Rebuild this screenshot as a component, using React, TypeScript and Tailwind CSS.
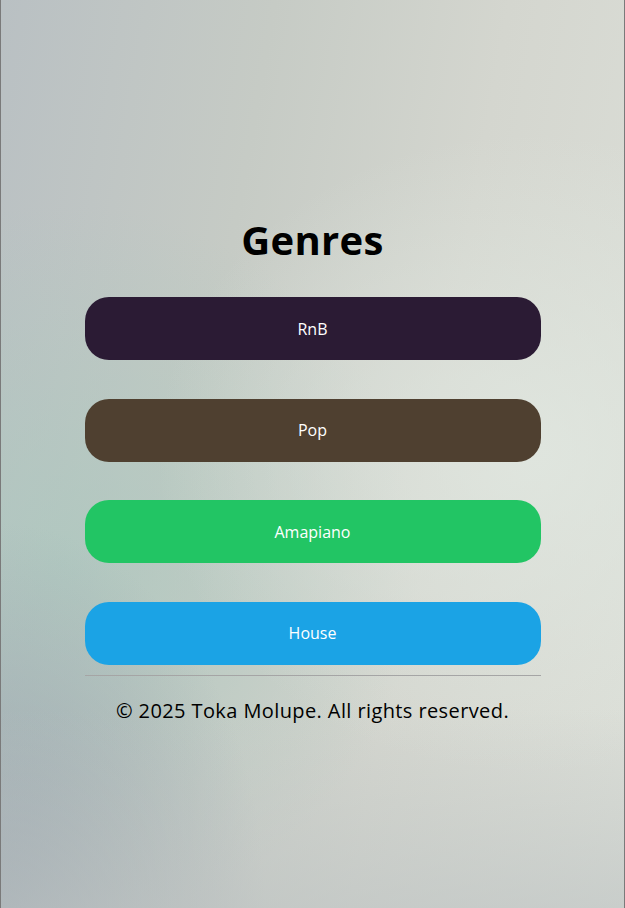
export default function App() {
  const genres = [
    { name: "RnB", cls: "bg-[#2b1b34]" },
    { name: "Pop", cls: "bg-[#4f4030]" },
    { name: "Amapiano", cls: "bg-[#22c564]" },
    { name: "House", cls: "bg-[#1ba3e5]" },
  ];
  return (
    <div
      className="relative h-[908px] w-[625px] overflow-hidden border-x border-[#7a7a7a] bg-[linear-gradient(100deg,#b9c0c3_0%,#c6cbc5_35%,#d4d6cf_65%,#dcdfd8_100%)]"
      style={{ fontFamily: "'Open Sans', 'Noto Sans', sans-serif" }}
    >
      <div className="pointer-events-none absolute inset-0 bg-[radial-gradient(ellipse_at_10%_62%,rgba(170,200,190,0.7)_0%,rgba(170,200,190,0)_45%)]" />
      <div className="pointer-events-none absolute inset-0 bg-[radial-gradient(ellipse_at_85%_50%,rgba(225,232,225,0.8)_0%,rgba(225,232,225,0)_50%)]" />
      <div className="pointer-events-none absolute inset-0 bg-[radial-gradient(ellipse_at_0%_100%,rgba(150,162,172,0.85)_0%,rgba(150,162,172,0)_30%)]" />
      <div className="pointer-events-none absolute inset-0 bg-[linear-gradient(to_top,rgba(188,194,194,0.6)_0%,rgba(188,194,194,0)_22%)]" />
      <div className="relative flex flex-col items-center pt-[214px]">
        <h1 className="text-[40px] font-bold leading-[52px] tracking-[0.3px] text-black">Genres</h1>
        <div className="mt-[31px] flex w-[456px] flex-col gap-[38.5px]">
          {genres.map((g) => (
            <button
              key={g.name}
              className={`flex h-[63px] w-full items-center justify-center rounded-[24px] text-[16px] font-medium text-white ${g.cls}`}
            >
              {g.name}
            </button>
          ))}
        </div>
        <div className="mt-[10px] h-px w-[456px] bg-[#a5a5a5]" />
        <p className="mt-[20px] text-[20px] tracking-[0.4px] text-black">© 2025 Toka Molupe. All rights reserved.</p>
      </div>
    </div>
  );
}
